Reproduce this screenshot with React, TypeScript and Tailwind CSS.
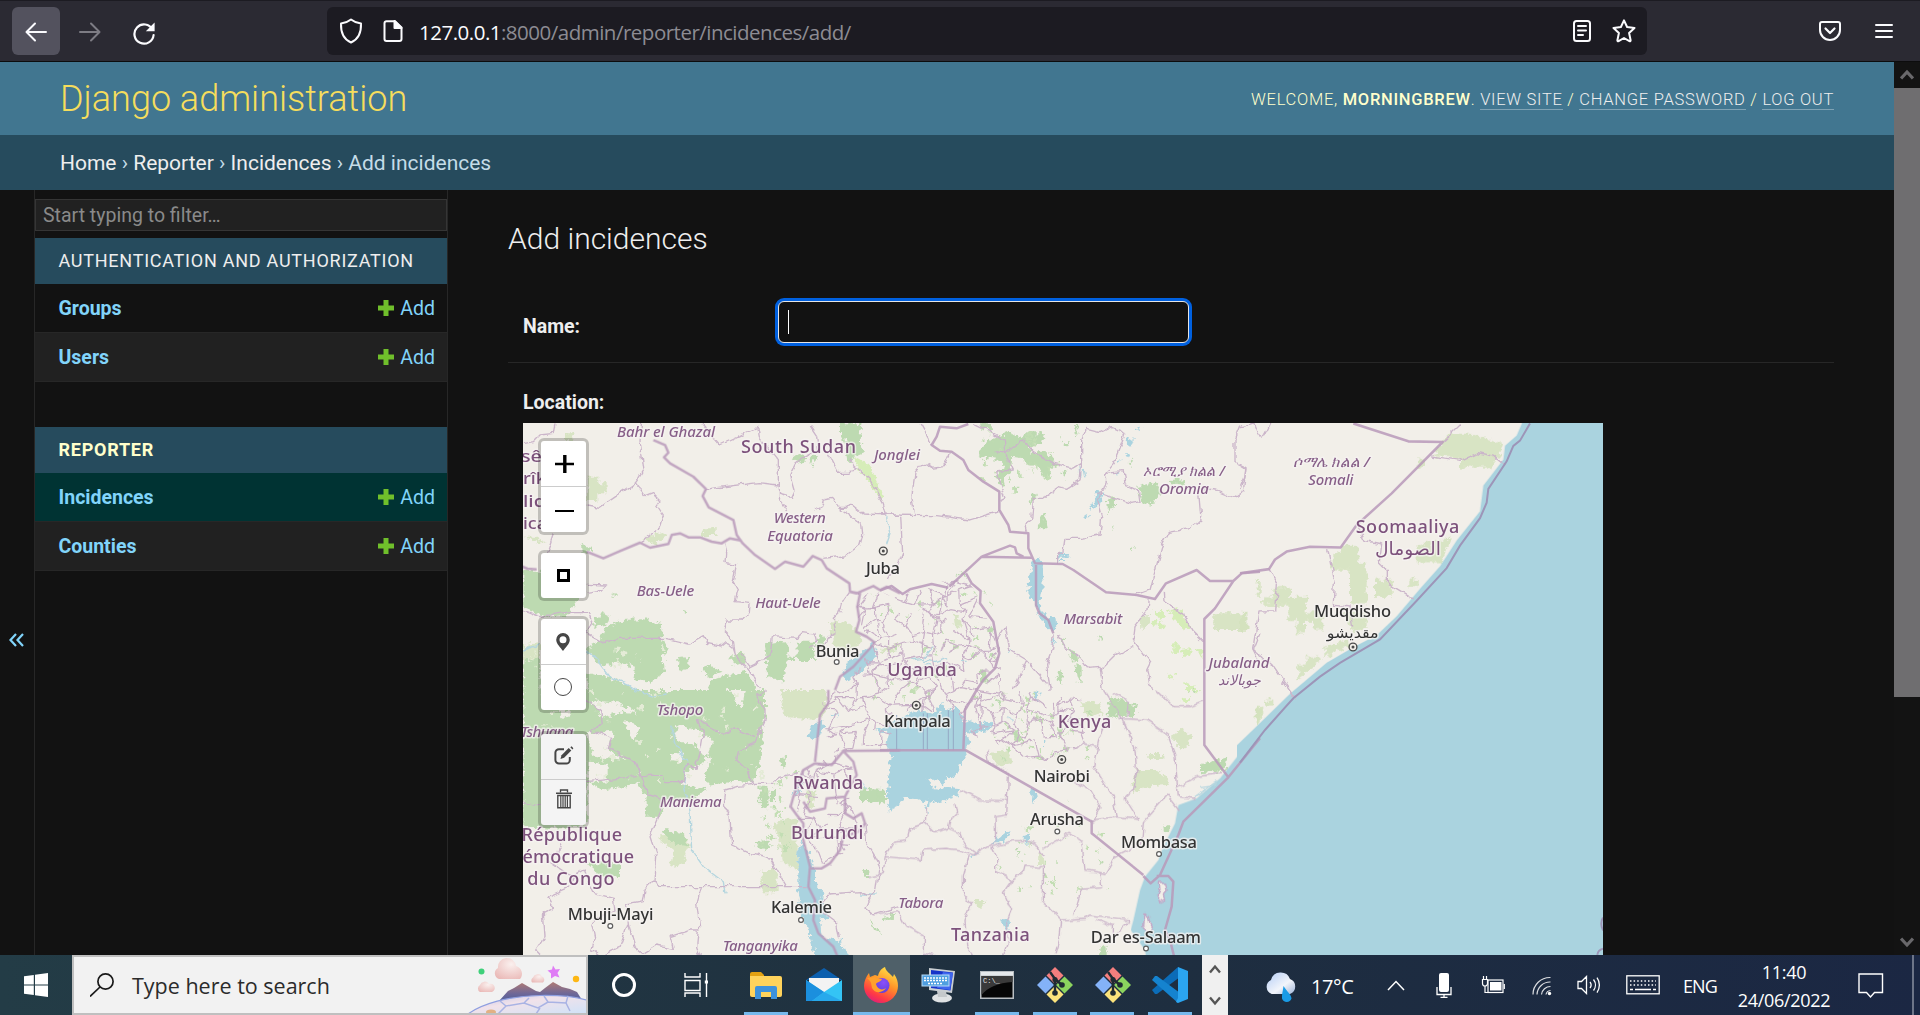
import React from "react";

/* ------------------------------------------------------------------ */
/* Map data: each sheet is a section of the map with its own grid     */
/* ------------------------------------------------------------------ */

type Sheet = {
  t: string;
  water?: string;
  ocean?: string;
  green?: string;
  holes?: string;
  pale?: string;
  lime?: string;
  rivers?: string;
  admin: string;
  nation: string;
  sea?: string;
  islands?: string;
};

const sheets: Sheet[] = [
  {
    t: "translate(520 420) scale(.33333)",
    green:
      "M10 452H190L165 560 140 585 80 590 10 560Z M220 600L250 580 272 590 255 615 225 620Z M250 630L300 600 370 598 425 610 430 655 445 680 430 710 435 760 390 785 340 780 345 740 300 725 250 740 215 710 200 680 240 660Z M735 670L780 665 805 668 805 710 830 710 830 665 880 665 885 720 800 720 790 785 745 770Z M475 715L505 710 505 745 475 755Z M545 740L575 735 605 755 560 770Z M815 115L835 100 860 115 840 130Z M868 120l12 -15 8 5 -10 28z M960 10L1025 10 1018 50 1030 100 1005 110 985 125 975 60 960 45Z M275 525l12 -2 3 8z M485 570l12 2 3 10 -12 -2z M625 715L670 695 680 725 650 735z M185 375l25 5 0 15 -20 0z M900 640l20 10 -10 30 -25 0z M10 720L60 715 62 810 10 810z M200 760L260 770 330 800 340 810 200 810z M580 775l100 -20 20 30 10 25 -150 0z",
    pale: "M200 170h35v20h25v30h-25v20h-30z M135 40h25v20h-25z M545 325h45v20h-45z M10 350l50 20 20 0 -40 -20z M370 355l60 -20 15 10 -40 30z M930 600l60 10 40 50 -40 40 -50 -20z M10 675L60 670 60 720 10 720z",
    lime: "M1005 110L1050 135 1080 205 1090 250 1060 205 1010 140Z",
    water: "M1060 670L1072 700 1040 740 1000 770 985 785 965 765 990 720 1040 685Z",
    rivers: "M10 690L60 675 M200 690L230 720 270 770 320 790 350 810 M1100 290L1110 340 1100 370",
    nation:
      "M400 60L435 75 445 98 432 112 450 130 520 170 558 207 548 228 566 262 640 300 650 345 668 370 705 405 765 447 795 425 850 440 878 408 905 420 920 445 988 490 990 515 1020 520 1012 560 1018 600 1008 635 1040 650 1065 668 M0 437L22 446 50 448 M200 395L250 415 300 393 360 368 390 383 445 372 455 345 480 340 505 352 540 352 575 365 605 370 630 355 665 362 M1065 668L1000 740 960 770 945 810 M988 515L1010 520 1060 498 1080 510 1100 500 1140 520",
    admin:
      "M105 10L100 40 60 45 40 65 15 70 M365 10L360 60 372 150 360 170 345 190 240 262 200 255 M345 190L375 230 400 220 420 240 410 255 430 285 420 320 380 350 365 368 M545 10L600 75 710 25 715 50 775 125 775 235 800 270 M558 207L715 188 775 195 M775 222L815 232 825 210 812 165 830 130 855 110 895 90 890 50 870 20 M918 90L955 160 990 160 1005 142 M985 120L1050 180 1090 250 1100 290 M885 270L905 260 910 240 935 235 960 265 975 265 990 250 1030 282 1140 286 M960 265L1025 315 1028 345 1020 375 975 408 910 415 M615 370L620 400 618 428 650 435 640 480 655 510 645 545 690 550 688 575 665 600 620 600 610 630 640 660 645 700 M988 515L970 540 960 575 940 595 948 640 925 650 905 680 870 685 M200 490L260 492 235 515 200 520 M10 570L60 590 150 575 205 575 215 605 200 640 250 668 300 655 440 655 510 672 550 650 560 670 600 678 615 665 640 685 650 715 680 740 700 770 718 810 M660 700L690 740 750 710 757 650 830 655 850 635 885 640 890 665 M100 340L90 370 80 400",
  },
  {
    t: "translate(520 690) scale(.33333)",
    green:
      "M10 0H735L735 60 730 100 725 210 695 280 645 275 560 285 555 240 580 200 560 205 530 235 495 240 490 285 560 295 520 330 430 330 425 380 380 380 375 310 350 280 260 300 200 275 200 410 10 415Z M718 290L745 290 745 355 720 350Z M750 300l15 0 0 30 -15 0z M705 460L740 452 755 470 730 478Z M200 520L300 520 300 565 240 555Z M1020 295L1090 300 1090 335 1020 332Z M1030 540h15v18h-15z M780 210l15 -10 5 20 -15 15z M1050 690L1085 730 1060 720z M1085 685L1125 675 1120 690z M430 420l60 10 20 40 -60 -10z",
    holes:
      "M620 0L675 0 665 55 640 20Z M470 105L515 115 545 130 580 150 560 200 540 190 525 160 480 160 465 140Z M495 250L555 235 555 290 500 295Z M200 130L280 125 265 180 320 210 220 200Z M450 190L490 185 485 215 455 210Z M215 30l80 10 60 30 -50 -5 -60 20z M205 215l55 10 0 50 -55 0z M100 40l60 30 -30 15z M310 90l50 20 -20 40z",
    pale: "M760 400L830 380 835 540 790 520 775 450Z M725 540h45v70h-45z M780 0h140v60l-30 30 -100 -10z M410 440l80 -10 20 30 -20 60 -40 10 10 -50z M265 220h50v50h-50z M860 300l30 0 -10 50 -20 0z",
    water:
      "M848 450L860 480 885 530 885 580 910 605 905 640 925 680 900 690 905 740 960 750 985 795 985 815 890 810 870 740 850 690 835 600 835 560 835 500 842 520 832 490Z M875 105L915 90 900 140 885 145 860 140Z M830 280L850 250 845 290 815 320Z M1145 115L1100 165 1110 185 1115 220 1100 300 1110 365 1145 330Z M930 75l30 -5 -20 12z",
    rivers: "M340 0L400 20 440 15 M455 110L470 170 500 215 490 290 510 360 515 480 550 530 610 575 615 610 M1020 615L1070 615 M1020 270L1040 300",
    nation:
      "M925 0L925 40 900 75 885 215 M1140 181L970 183 935 225 885 220 850 240 840 265 820 320 812 350 830 375 850 400 850 450 870 530 865 590 885 630 880 690 895 730 940 770 955 805 M970 183L1000 215 1010 255 985 300 975 320 920 325 915 355 870 365 850 335 M975 320L975 370 1000 385 1025 370 1035 400 1015 425 970 440 960 480 930 520 905 535 870 535",
    admin:
      "M200 30L245 65 250 100 210 120 275 145 265 175 345 215 365 260 430 258 435 275 490 275 500 220 525 235 540 190 550 130 530 90 570 110 610 130 650 115 705 140 M740 0L710 15 735 60 735 90 705 160 655 180 650 210 690 250 700 280 760 280 780 262 830 250 M700 283L650 290 615 300 610 340 630 380 635 465 690 490 750 505 800 590 M365 260L385 315 420 325 425 360 390 440 410 500 405 570 420 590 860 590 M405 570L375 600 370 635 320 645 325 700 345 770 370 790 410 765 460 775 450 740 510 720 535 720 530 770 545 810 M545 590L530 640 540 720 M120 460L110 490 90 495 80 510 155 560 190 540 220 610 280 625 285 660 240 680 215 700 225 750 215 780 240 800 300 770 325 700 M160 560L150 590 80 620 100 655 70 670 75 740 50 780 70 800 M10 335L60 345 M200 275L350 260 M1035 400L1040 460 1060 490 1080 530 1070 600 1050 620 1035 655 1060 675 1140 650 M905 640L930 612 1020 605 1050 620 M905 660L945 690 955 745",
  },
  {
    t: "translate(880 420) scale(.33333)",
    green:
      "M295 95L330 60 390 35 420 55 430 40 495 40 490 65 450 80 455 105 480 90 510 105 535 135 510 145 515 175 485 165 480 140 440 135 430 115 400 110 395 150 370 180 345 170 375 140 350 120 300 110Z M775 200L830 185 845 215 830 235 815 255 785 250Z M865 180L910 178 915 195 870 190Z M300 10h35v15h-30z M450 235l15 -15 5 10 -15 25z M680 240l25 -10 0 25 -20 25z M485 280l10 0 5 45 -25 0z M565 690l25 5 5 30 -20 -5z M585 730l20 10 0 50 -15 -20z M530 755l15 0 5 40 -20 -20z M325 620l20 5 -5 20 -15 -10z M545 650l10 5 -2 30z M232 460l25 -5 0 20z M545 70l25 -5 -12 18z M585 15l10 0 0 30 -8 0z M400 195l15 5 -3 20 -12 -5z M690 318l12 2 -6 8z M752 385l10 -8 -5 20z M355 180l15 0 5 20 -15 -5z M655 655l15 -5 -5 15z M545 155l18 0 -8 20z M745 130l15 -15 -5 25z M300 750l20 5 5 30 -25 5z M325 700l20 -2 -5 15z",
    pale: "M780 590l30 -5 0 20 -25 28z M1000 580h102v50h-102z M1130 480h12v50h-12z M0 690l50 -20 15 5 -40 25z M220 580l15 10 10 30 -20 0z",
    lime: "M820 570l20 0 15 20 -15 10z M815 600l15 0 -5 20z M865 570l30 -5 35 60 -20 5 -30 -35z M840 605l15 10 -10 15 -12 -10z M880 670l15 0 5 25 -20 5z M905 690l30 -5 -5 25 -25 0z M945 690l25 -5 0 30z M865 765l20 -5 -5 20z M915 790l30 10 0 10 -30 0z",
    water:
      "M455 430L475 412 485 430 488 500 480 560 500 590 530 595 532 630 515 635 480 590 465 550 445 520 448 470Z M648 215L670 218 658 250 642 265 646 240Z M625 262L645 255 635 272Z M612 290L628 278 620 300Z M740 60L762 55 752 82 742 78Z M735 100l15 0 -5 14z M708 118l22 2 -18 8z M766 25l18 -6 -8 14z M530 402h35v8h-30z M530 420h25v6h-25z M514 660l8 0 -2 18z M707 160l8 0 -4 8z",
    rivers: "M90 720L130 715 160 680 M130 720L165 725 200 712 M135 730l20 10 M240 718h20 M600 140l3 30 M610 150l5 25 M388 700l10 -15",
    nation:
      "M265 12L230 25 180 20 170 50 155 75 180 92 215 95 250 120 265 150 310 185 358 215 358 270 385 315 390 335 445 340 445 385 465 430 548 432 580 450 678 517 770 525 825 537 858 490 950 450 990 483 1060 483 1085 460 1140 455 M208 500L305 410 455 413 M305 410L390 377 405 382 410 400 430 410 M0 512L35 498 68 522 90 508 155 492 205 503 M258 460L275 490 302 513 300 550 340 605 350 660 358 700 345 745 310 780 290 810 M1060 483L1005 565 973 597 973 810 M468 435V555L478 580 505 600 520 640",
    admin:
      "M0 285L170 287 270 300 358 273 M62 290L68 400 60 420 25 480 M105 285L95 230 105 160 130 130 155 145 190 140 208 100 M120 10L145 55 155 75 M280 10L340 40 370 60 375 100 400 150 350 155 378 235 360 245 M350 95L375 100 430 60 460 95 520 130 580 145 605 130 605 60 620 25 660 35 690 20 735 40 720 80 700 130 675 160 680 180 670 210 650 240 M605 130L600 180 560 205 540 200 490 235 460 235 455 300 435 315 440 335 M675 160L730 155 735 190 775 210 780 245 755 250 710 235 690 230 650 215 M650 240L665 290 660 345 610 355 555 355 548 400 530 405 530 428 M1085 10L1065 60 1065 125 1098 140 1090 215 1065 232 1010 210 955 205 963 300 930 325 868 337 845 380 810 510 770 525 M805 535L800 575 765 620 760 660 810 730 800 750 815 810 M850 515L852 545 910 580 935 630 970 665 M535 640L555 680 600 710 625 745 660 742 670 810 M660 750L705 705 760 680 M520 640L515 690 500 730 510 810 M350 660L375 620 390 690 440 720 500 790 M440 720L400 810 M1140 640L1120 690 1135 720",
  },
  {
    t: "translate(880 690) scale(.33333)",
    water:
      "M-12 120L50 90 110 60 170 70 185 40 200 60 230 55 255 90 300 100 335 95 340 110 290 130 255 120 270 160 255 185 260 200 235 225 240 250 215 270 200 255 195 280 160 270 140 265 165 300 195 290 240 295 235 315 180 335 150 330 145 370 135 335 110 325 70 320 55 350 30 360 20 320 30 290 25 250 35 190 35 170 20 160 25 130Z M455 300l15 0 3 20 -15 25 -5 -15z M335 460l45 -35 15 5 -30 30z M435 435l15 -5 -5 35 -12 -5z M360 685l25 5 5 30 -20 -10z M465 5h10v25h-10z M492 152h10v10h-10z M275 495l20 -5 -15 15z",
    ocean: "M1145 106L1060 215 1020 265 950 325 895 345 885 400 850 470 835 510 795 560 780 600 760 690 752 720 795 780 800 815H1145Z",
    green:
      "M690 25L740 30 770 45 765 75 700 80 680 75Z M960 225L1045 200 1040 235 1015 245 960 250Z M850 410l18 -5 0 25 -15 -5z M10 680l35 -10 0 15 -30 8z M655 780l25 -15 0 45 -25 0z M-5 300l20 5 0 35 -20 5z M535 110l10 0 0 35 -10 0z M345 25l20 10 -5 20z M405 480l10 0 0 20z M415 450l14 5 -8 10z M655 510l10 5 -5 12z M395 130l20 -10 10 40 -20 -10z M930 0l15 0 -10 8z",
    pale: "M880 135L905 118 930 135 925 170 905 180 880 155Z M770 240L830 240 865 265 860 285 790 290 760 310 755 285Z M805 192l45 0 0 15 -45 0z M475 490l12 0 5 35 -18 0z M280 630l40 0 -20 25z M325 190l60 -10 10 40 -40 10z M600 40l60 0 10 30 -50 10z M1128 50h14v50h-14z",
    lime: "M905 25l25 0 0 10 -20 3z M930 0l30 0 -10 12z",
    rivers: "M945 320L1010 275 M960 290L1000 285 M385 80l10 10",
    sea: "M50 75V181 M130 70V181 M142 70V181 M205 60V181 M220 60V181",
    islands: "M838 580l16 0 4 18 -8 18 4 12 -18 8 -4 -12 8 -20z M795 668l10 12 4 20 8 18 -12 6 -14 -12 2 -22z",
    nation:
      "M1140 145L1045 262 910 395 895 435 840 555 812 580 790 558 M973 0V165L1045 262 M0 181H258L635 395 635 430 790 555 M290 0L255 60 250 181 M830 558L865 558 880 575 875 650 855 720 870 750 885 810",
    admin:
      "M673 0L730 90 765 180 770 250 760 300 735 325 775 388 715 380 635 390 M715 85L800 90 860 130 885 200 895 320 950 325 M700 10L745 35 740 80 M680 90L655 155 640 230 700 320 712 380 M860 315L895 360 M860 315L790 395 785 460 705 500 675 550 615 540 605 455 570 430 490 475 M830 0L880 50 930 50 970 35 M895 290L950 260 1020 250 M385 255L380 375 348 380 350 455 280 495 M240 300L300 330 380 332 M280 495L240 480 200 475 125 480 120 510 20 500 10 550 -40 560 M10 510L40 460 80 455 90 415 135 400 140 350 M135 395L165 425 205 415 210 390 230 370 225 340 M205 415L240 430 250 460 290 490 M335 470L350 500 350 545 395 570 430 545 435 525 490 530 490 635 545 690 610 685 630 675 750 690 M335 470L400 455 450 455 475 470 490 500 M660 550L665 590 605 595 580 680 M265 495L250 560 250 610 275 640 255 690 260 770 280 800 M395 570L370 605 395 660 375 710 385 760 370 800 M545 690L540 740 525 790 M-10 675L55 665 75 705 130 735 130 790 180 800 M650 690L700 710 700 740 750 690 M320 180L330 220 385 250 M540 250L630 300 660 350 640 395 M580 180L610 160 650 170",
  },
  {
    t: "translate(1240 420) scale(.33333 .34439)",
    ocean:
      "M850 0H1100V1560H-10V945L60 880 150 795 260 705 340 660 410 625 470 570 540 490 600 425 650 350 720 265 730 190 790 115 795 75 830 45Z",
    pale: "M625 40L690 40 790 70 780 100 750 138 660 138 660 110 580 105Z M533 115h25v22h-25z M278 390L305 385 305 365 355 365 355 412 380 412 380 532 330 532 330 437 278 437Z M405 463h50v50h-50z M533 365L635 340 620 380 600 413h-67z M73 512h27v-24h50v25h50v45h50v50l-30 0 0 -25 -25 0v36h-25v-35h-25v-45l-50 0h-27z M0 560h22v52h-22z M200 687h45v12l-70 55v-44h25z M253 660l75 -25 0 20 -75 35z M75 812h25v20h-25z M47 835h20v25l-20 28z M508 463h25v22h-25z M310 560h70v40l-40 20z",
    nation: "M340 10L505 62 608 64 455 213 350 305 302 370 210 368 140 382 105 405 87 433 0 445",
    admin:
      "M608 64L665 10 M570 107L660 120 715 95 760 105 795 132 M350 305L375 350 425 360 418 415 445 440 445 475 527 523 M263 375L283 475 280 535 330 540 338 600 M87 433L112 475 107 557 57 557 38 665 95 710 165 808 M0 130L18 140 15 165 0 200 M0 20L45 12 60 50 75 40 90 10",
  },
];

const maritime =
  "M0 995L75 900 160 808 240 745 300 705 420 637 530 525 620 430 660 365 720 285 740 240 745 200 800 120 820 75 840 60 870 10 M1089 1445C1083 1455 1083 1470 1089 1482 M1089 1535C1080 1537 1073 1545 1072 1553";

type Kind = "country" | "state" | "city";
const labels: [string, number, number, number, number, Kind][] = [
  ["sê", 521, 461.7, 21, 17, "country"],
  ["rîk", 523, 484, 23, 17, "country"],
  ["liq", 523, 506.7, 23, 17, "country"],
  ["ica", 523, 529, 24, 17, "country"],
  ["Bahr el Ghazal", 617, 437, 98, 15, "state"],
  ["South Sudan", 741, 453, 115, 18, "country"],
  ["Jonglei", 874, 460, 46, 15, "state"],
  ["Western", 773.7, 522.7, 52, 15, "state"],
  ["Equatoria", 767.3, 540.7, 65.5, 15, "state"],
  ["Bas-Uele", 636.7, 596, 57.5, 15, "state"],
  ["Haut-Uele", 755.3, 608, 65.5, 15, "state"],
  ["Juba", 866, 574, 34, 16.5, "city"],
  ["Bunia", 815.7, 656.7, 43.7, 16.5, "city"],
  ["Uganda", 887.3, 675.7, 69.5, 18, "country"],
  ["Marsabit", 1063.3, 624, 59, 15, "state"],
  ["ኦሮሚያ ክልል /", 1143, 476, 82, 15, "state"],
  ["Oromia", 1159, 494, 50, 15, "state"],
  ["ሶማሌ ክልል /", 1292.7, 466.5, 77, 15, "state"],
  ["Somali", 1308.3, 484.7, 45, 15, "state"],
  ["Jubaland", 1208.5, 668, 61, 15, "state"],
  ["جوبالاند", 1217.6, 684.5, 44, 14, "state"],
  ["Soomaaliya", 1355.7, 532.6, 103.7, 18, "country"],
  ["الصومال", 1375, 555, 66, 18, "country"],
  ["Muqdisho", 1314, 617, 77, 16.5, "city"],
  ["مقديشو", 1326.7, 637.6, 52, 15, "city"],
  ["Kenya", 1057.7, 728.3, 53.7, 18, "country"],
  ["Kampala", 884, 726.7, 66.7, 16.5, "city"],
  ["Nairobi", 1033.7, 781.7, 56.3, 16.5, "city"],
  ["Arusha", 1030, 824.7, 54, 16.5, "city"],
  ["Mombasa", 1121, 848, 76, 16.5, "city"],
  ["Dar es-Salaam", 1090.7, 943.3, 110.3, 16.5, "city"],
  ["Tanzania", 951, 941, 78.7, 18, "country"],
  ["Tabora", 898.3, 907.7, 45, 15, "state"],
  ["Tshopo", 656.7, 715, 46.7, 15, "state"],
  ["Tshuapa", 520.5, 736.5, 53, 15, "state"],
  ["Maniema", 660, 806.7, 61.7, 15, "state"],
  ["Rwanda", 792.7, 789.3, 70.7, 18, "country"],
  ["Burundi", 791, 838.7, 72.3, 18, "country"],
  ["République", 521.5, 840.7, 100.5, 18, "country"],
  ["émocratique", 522.5, 862.7, 111.5, 18, "country"],
  ["du Congo", 527.3, 885.3, 87.3, 18, "country"],
  ["Mbuji-Mayi", 567.7, 920, 85.7, 16.5, "city"],
  ["Kalemie", 771, 913.3, 61, 16.5, "city"],
  ["Tanganyika", 722.7, 951.2, 75.3, 15, "state"],
];

const labelClass: Record<Kind, string> = {
  country: "fill-[#7d527c] font-medium",
  state: "fill-[#875f88] italic font-medium",
  city: "fill-[#333] font-medium",
};

const towns: [number, number][] = [
  [836.7, 662],
  [1057.3, 831.5],
  [1159, 854],
  [1146, 948.5],
  [610.3, 926],
  [801, 920],
];
const capitals: [number, number][] = [
  [883.3, 551],
  [916.3, 705.3],
  [1061.7, 759.5],
  [1353, 647],
];

/* Irregular network used for the dense district boundaries */
function mesh(x0: number, y0: number, x1: number, y1: number, s: number) {
  let seed = 7;
  const rnd = () => {
    seed = (seed * 16807) % 2147483647;
    return seed / 2147483647 - 0.5;
  };
  const cols = Math.ceil((x1 - x0) / s) + 1;
  const rows = Math.ceil((y1 - y0) / s) + 1;
  const p: [number, number][][] = [];
  for (let r = 0; r < rows; r++) {
    p.push([]);
    for (let c = 0; c < cols; c++) p[r].push([x0 + c * s + rnd() * s * 1.15, y0 + r * s + rnd() * s * 1.15]);
  }
  const seg = (a: [number, number], b: [number, number]) => `M${a[0].toFixed(1)} ${a[1].toFixed(1)}L${b[0].toFixed(1)} ${b[1].toFixed(1)}`;
  let d = "";
  for (let r = 0; r < rows; r++)
    for (let c = 0; c < cols; c++) {
      if (c + 1 < cols && rnd() < 0.2) d += seg(p[r][c], p[r][c + 1]);
      if (r + 1 < rows && rnd() < 0.25) d += seg(p[r][c], p[r + 1][c]);
    }
  return d;
}
const districtsNorth = mesh(810, 580, 1100, 770, 11);
const districtsSouth = mesh(785, 750, 875, 870, 12);

/* Scattered vegetation specks */
function specks(x0: number, y0: number, x1: number, y1: number, n: number, start: number) {
  let seed = start;
  const rnd = () => {
    seed = (seed * 16807) % 2147483647;
    return seed / 2147483647;
  };
  let d = "";
  for (let i = 0; i < n; i++) {
    const w = 1 + rnd() * 3;
    d += `M${(x0 + rnd() * (x1 - x0)).toFixed(1)} ${(y0 + rnd() * (y1 - y0)).toFixed(1)}l${w.toFixed(1)} ${(rnd() * 2).toFixed(1)} 0 ${w.toFixed(1)} -${w.toFixed(1)} 0z`;
  }
  return d;
}
const greenSpecks =
  specks(870, 590, 1000, 700, 40, 11) + specks(990, 690, 1090, 760, 45, 23) + specks(990, 800, 1110, 900, 30, 31) + specks(760, 770, 800, 850, 30, 5) + specks(980, 430, 1060, 490, 30, 77);
const creamSpecks = specks(540, 690, 765, 780, 60, 41) + specks(525, 640, 670, 700, 30, 97);

function MapCanvas() {
  return (
    <svg viewBox="523 423 1080 532" className="block h-[532px] w-[1080px] bg-[#f2efe9]" fill="none">
      <defs>
        <filter id="wiggle" x="523" y="423" width="1080" height="532" filterUnits="userSpaceOnUse" colorInterpolationFilters="sRGB">
          <feTurbulence type="fractalNoise" baseFrequency="0.11" numOctaves="2" seed="4" />
          <feDisplacementMap in="SourceGraphic" scale="7" xChannelSelector="R" yChannelSelector="G" />
        </filter>
        <filter id="rough" x="523" y="423" width="1080" height="532" filterUnits="userSpaceOnUse" colorInterpolationFilters="sRGB">
          <feTurbulence type="fractalNoise" baseFrequency="0.2" numOctaves="3" seed="9" />
          <feDisplacementMap in="SourceGraphic" scale="9" xChannelSelector="R" yChannelSelector="G" />
        </filter>
        <clipPath id="northClip">
          <path d="M858 593L903 594 930 588 966 573 980 605 1000 650 1000 690 1040 692 1082 700 1085 745 1040 765 1000 745 968 735 960 712 900 712 885 750 828 752 822 700 845 685 875 645 858 620Z" />
        </clipPath>
        <clipPath id="southClip">
          <path d="M815 765L843 752 856 775 848 798 862 815 855 840 830 866 810 860 802 825 792 805 803 770Z" />
        </clipPath>
      </defs>

      <g filter="url(#rough)">
        {sheets.map((s, i) => (
          <g key={i} transform={s.t}>
            {s.pale && <path d={s.pale} fill="#d4e2bd" fillOpacity=".85" />}
            {s.lime && <path d={s.lime} fill="#d6edb8" />}
            {s.green && <path d={s.green} fill="#bddab1" />}
            {s.holes && <path d={s.holes} fill="#f2efe9" />}
          </g>
        ))}
        <path d={greenSpecks} fill="#c3deb4" />
        <path d={creamSpecks} fill="#e4ebd6" />
        {sheets.map((s, i) => (
          <g key={i} transform={s.t}>
            {s.water && <path d={s.water} fill="#aad3df" />}
          </g>
        ))}
      </g>

      {sheets.map((s, i) => (
        <g key={i} transform={s.t}>
          {s.ocean && <path d={s.ocean} fill="#aad3df" />}
        </g>
      ))}
      <path d="M889 722L958 715 962 748 890 750Z" fill="#aad3df" />

      <g filter="url(#wiggle)" strokeLinejoin="round">
        <g clipPath="url(#northClip)">
          <path d={districtsNorth} stroke="#c8b0c7" strokeWidth="1.2" />
        </g>
        <g clipPath="url(#southClip)">
          <path d={districtsSouth} stroke="#c8b0c7" strokeWidth="1.2" />
        </g>
        {sheets.map((s, i) => (
          <g key={i} transform={s.t}>
            {s.rivers && <path d={s.rivers} stroke="#b5d6df" strokeWidth="4" />}
            {s.islands && <path d={s.islands} fill="#f2efe9" stroke="#c0a5c6" strokeWidth="4" />}
            <path d={s.admin} stroke="#cbb5ca" strokeWidth="4" />
          </g>
        ))}
      </g>
      {sheets.map((s, i) => (
        <g key={i} transform={s.t} strokeLinejoin="round">
          {s.sea && <path d={s.sea} stroke="#96a9c4" strokeWidth="3" />}
          <path d={s.nation} stroke="#b999ba" strokeOpacity=".85" strokeWidth="7.5" />
        </g>
      ))}
      <g transform="translate(1240 420) scale(.33333 .34439)">
        <path d={maritime} stroke="#9d95b8" strokeWidth="6" />
      </g>

      {towns.map(([x, y]) => (
        <circle key={x} cx={x} cy={y} r="2.4" fill="#fff" stroke="#5c5c5c" strokeWidth="1.2" />
      ))}
      {capitals.map(([x, y]) => (
        <g key={x}>
          <circle cx={x} cy={y} r="3.9" fill="#f2efe9" stroke="#4b4b4b" strokeWidth="1.4" />
          <circle cx={x} cy={y} r="1.5" fill="#4b4b4b" />
        </g>
      ))}
      <g fontFamily="'Noto Sans', 'DejaVu Sans', sans-serif" stroke="#f6f3f2" strokeOpacity=".75" strokeWidth="3" strokeLinejoin="round" paintOrder="stroke">
        {labels.map(([t, x, y, w, size, kind]) => (
          <text key={t} x={x} y={y} textLength={w} fontSize={size} lengthAdjust={/[a-z]/.test(t) && t.length > 3 ? "spacing" : "spacingAndGlyphs"} className={labelClass[kind]}>
            {t}
          </text>
        ))}
      </g>
    </svg>
  );
}

function MapControls() {
  const group = "overflow-hidden rounded-md border-[3px] border-black/20 bg-clip-padding";
  const cell = "flex h-[45px] w-[45px] items-center justify-center";
  return (
    <div className="absolute left-[15px] top-[15px] flex flex-col gap-[15px]">
      <div className={group + " bg-white"}>
        <div className={cell + " pl-0.5"}>
          <svg viewBox="0 0 19 19" className="h-[19px] w-[19px]" stroke="#000">
            <path d="M0 10h19" strokeWidth="2.4" />
            <path d="M9.8 1v18" strokeWidth="3.4" />
          </svg>
        </div>
        <div className={cell + " h-[46px] border-t border-[#ccc] pb-0 pl-0.5 pt-0.5"}>
          <div className="h-0.5 w-[19px] bg-black" />
        </div>
      </div>
      <div className={group + " bg-white"}>
        <div className={cell}>
          <div className="h-[13px] w-[13px] border-[3px] border-black" />
        </div>
      </div>
      <div className={group + " bg-white"}>
        <div className={cell + " pr-px"}>
          <svg viewBox="0 0 14 18" className="h-[18px] w-[14px]">
            <path
              fillRule="evenodd"
              fill="#464646"
              d="M7 0a6.8 6.8 0 0 1 6.8 6.8C13.8 11 9.5 14.5 7 18 4.5 14.5.2 11 .2 6.8A6.8 6.8 0 0 1 7 0zM7 3.2a3.500 3.500 0 1 0 0 7 3.500 3.500 0 0 0 0-7z"
            />
          </svg>
        </div>
        <div className={cell + " h-[46px] border-t border-[#ccc] pb-0.5 pr-0.5"}>
          <div className="h-[18px] w-[18px] rounded-full border-[1.5px] border-[#464646]" />
        </div>
      </div>
      <div className={group + " mt-[3px] bg-[#f4f4f4]"}>
        <div className={cell + " pb-0.5"}>
          <svg viewBox="0 0 20 20" className="h-5 w-5" fill="none" stroke="#464646">
            <path d="M10 3.200H5a3.600 3.600 0 0 0-3.600 3.600V14A3.600 3.600 0 0 0 5 17.600h7.200a3.600 3.600 0 0 0 3.600-3.600v-3" strokeWidth="2" />
            <path d="M6.500 13l1-3.800 7.200-7.200 2.600 2.600-7.200 7.200z" fill="#464646" stroke="none" />
            <path d="M16.300 1.200l1.300-.9 1.800 1.900-1 1.200z" fill="#464646" stroke="none" />
          </svg>
        </div>
        <div className={cell + " h-[46px] border-t border-[#ccc] pb-2"}>
          <svg viewBox="0 0 18 20" className="h-5 w-[18px]" fill="none" stroke="#464646">
            <path d="M1 4.200h16" strokeWidth="1.500" />
            <path d="M5.500 3.500V1h7v2.500" strokeWidth="1.300" />
            <path d="M2.800 6.500h12.400v12.300H2.800z" strokeWidth="1.400" />
            <path d="M5.800 7v11.500M8 7v11.500M10.200 7v11.500M12.400 7v11.500" strokeWidth="1.200" />
          </svg>
        </div>
      </div>
    </div>
  );
}

/* ------------------------------------------------------------------ */
/* Browser chrome                                                      */
/* ------------------------------------------------------------------ */

function BrowserBar() {
  return (
    <header className="flex h-[62px] items-center border-b border-t border-b-[#0c0c0d] border-t-[#1c1b22] bg-[#2b2a33] text-[#fbfbfe]">
      <div className="ml-3 flex h-12 w-12 items-center justify-center rounded-md bg-[#53525e]">
        <svg viewBox="0 0 22 20" className="mt-0.5 h-5 w-[22px]" fill="none" stroke="currentColor" strokeWidth="2" strokeLinecap="round" strokeLinejoin="round">
          <path d="M21 10H2M10 1.500L1.500 10l8.500 8.500" />
        </svg>
      </div>
      <div className="ml-[19px] mt-0.5 flex w-[22px] text-[#7d7c84]">
        <svg viewBox="0 0 22 20" className="h-5 w-[22px]" fill="none" stroke="currentColor" strokeWidth="2" strokeLinecap="round" strokeLinejoin="round">
          <path d="M1 10h19M12 1.500l8.500 8.500-8.500 8.500" />
        </svg>
      </div>
      <svg viewBox="0 0 24 24" className="ml-[31px] mt-[3px] h-6 w-6" fill="none" stroke="currentColor" strokeWidth="2.200">
        <path d="M20.500 8.500A9.600 9.600 0 1 0 21.600 14" strokeLinecap="round" />
        <path d="M22.600 1.500v8.800h-8.800z" fill="currentColor" stroke="none" />
      </svg>
      <div className="ml-[171px] flex h-12 w-[1320px] items-center rounded-md bg-[#1c1b22] pl-3 pr-[11px]">
        <svg viewBox="0 0 24 26" className="h-[26px] w-6" fill="none" stroke="currentColor" strokeWidth="2" strokeLinejoin="round">
          <path d="M12 1.500c3 2.400 6.300 3.600 10 4C22.300 14 19 21.500 12 24.500 5 21.500 1.700 14 2 5.500c3.700-.4 7-1.600 10-4z" />
        </svg>
        <svg viewBox="0 0 20 22" className="ml-5 h-[22px] w-5" fill="none" stroke="currentColor" strokeWidth="2">
          <path d="M12 1.200H3.500A2 2 0 0 0 1.500 3v16a2 2 0 0 0 2 2h13a2 2 0 0 0 2-2V7.500z" strokeLinejoin="round" />
          <path d="M11.500 1v7H18.500z" fill="currentColor" strokeLinejoin="round" />
        </svg>
        <p className="ml-4 mt-0.5 font-['Open_Sans'] text-[20.5px] tracking-[-0.5px] text-[#8d8c93]">
          <span className="text-[#fbfbfe]">127.0.0.1</span>:8000/admin/reporter/incidences/add/
        </p>
        <svg viewBox="0 0 18 22" className="ml-auto h-[22px] w-[18px]" fill="none" stroke="currentColor" strokeWidth="2">
          <rect x="1" y="1" width="16" height="20" rx="2.500" />
          <path d="M5 6h8M5 10.500h8M5 15h5" strokeLinecap="round" />
        </svg>
        <svg viewBox="0 0 24 24" className="ml-[21px] h-6 w-6" fill="none" stroke="currentColor" strokeWidth="2" strokeLinejoin="round">
          <path d="M12 1.300l3.100 6.700 7.400.9-5.400 5.100 1.500 7.300c.1.700-.5 1.200-1.200.9L12 19l-5.400 3.200c-.7.300-1.300-.2-1.200-.9L6.900 14 1.500 8.900 8.900 8z" />
        </svg>
      </div>
      <svg viewBox="0 0 22 20" className="ml-[172px] h-5 w-[22px]" fill="none" stroke="currentColor" strokeWidth="2" strokeLinecap="round" strokeLinejoin="round">
        <path d="M3 1h16a2 2 0 0 1 2 2v6a10 10 0 0 1-20 0V3a2 2 0 0 1 2-2z" />
        <path d="M6.500 7.500L11 12l4.500-4.500" strokeWidth="2.200" />
      </svg>
      <div className="ml-[34px] flex w-[18px] flex-col gap-1">
        <i className="h-0.5 rounded bg-[#fbfbfe]" />
        <i className="h-0.5 rounded bg-[#fbfbfe]" />
        <i className="h-0.5 rounded bg-[#fbfbfe]" />
      </div>
    </header>
  );
}

/* ------------------------------------------------------------------ */
/* Django admin                                                        */
/* ------------------------------------------------------------------ */

function ModelRow({ name, tone }: { name: string; tone: string }) {
  return (
    <div className={"flex h-[49px] items-center border-b border-[#272727] pl-[23.5px] pr-3 pt-0.5 text-[#81d4fa] " + tone}>
      <span className="text-[19.5px] font-bold">{name}</span>
      <svg viewBox="0 0 16 16" className="mb-0.5 ml-auto h-4 w-4" fill="#70bf2b">
        <path d="M5.500 0h5v5.500H16v5h-5.500V16h-5v-5.500H0v-5h5.500z" />
      </svg>
      <span className="ml-[6px] text-[19.5px]">Add</span>
    </div>
  );
}

function Caption({ children, className }: { children: string; className: string }) {
  return <h2 className={"flex h-[46px] items-center bg-[#264b5d] pb-0.5 pl-[23.5px] text-[18px] tracking-[0.75px] " + className}>{children}</h2>;
}

function Sidebar() {
  return (
    <nav className="w-[414px] shrink-0 border-x border-[#272727] pt-[9px]">
      <div className="flex h-8 items-center border border-[#353535] bg-[#212121] pl-[7px] pt-0.5 text-[19.5px] text-[#8a8a8a]">Start typing to filter…</div>
      <div className="mt-[7px]">
        <Caption className="text-[#eee]">AUTHENTICATION AND AUTHORIZATION</Caption>
        <ModelRow name="Groups" tone="bg-[#121212]" />
        <ModelRow name="Users" tone="bg-[#212121]" />
      </div>
      <div className="mt-[45px]">
        <Caption className="font-bold text-[#ffffcc]">REPORTER</Caption>
        <ModelRow name="Incidences" tone="bg-[#003333]" />
        <ModelRow name="Counties" tone="bg-[#212121]" />
      </div>
    </nav>
  );
}

function Admin() {
  const link = "border-b border-[#7fa3b5] text-[#eee]";
  return (
    <div className="flex h-[893px] w-[1894px] flex-col overflow-hidden bg-[#121212] font-['Roboto']">
      <div className="flex h-[73px] shrink-0 items-center justify-between bg-[#417690] pl-[60px] pr-[60px]">
        <h1 className="text-[36px] font-light text-[#f5dd5d]">Django administration</h1>
        <div className="mt-0.5 flex whitespace-pre text-[16.5px] font-light leading-[19px] tracking-[0.72px] text-[#ffffcc]">
          WELCOME, <b className="font-medium">MORNINGBREW</b>. <span className={link}>VIEW SITE</span> / <span className={link}>CHANGE PASSWORD</span> /{" "}
          <span className={link}>LOG OUT</span>
        </div>
      </div>
      <div className="flex h-[55px] shrink-0 items-center whitespace-pre bg-[#264b5d] pl-[60px] pt-0.5 text-[21px] text-[#c4dce8]">
        <span className="text-[#eee]">Home</span> › <span className="text-[#eee]">Reporter</span> › <span className="text-[#eee]">Incidences</span> › Add incidences
      </div>
      <div className="flex min-h-0 flex-1">
        <div className="flex w-[34px] shrink-0 justify-center pr-0.5 pt-[443px] text-[#81d4fa]">
          <svg viewBox="0 0 15 14" className="h-[14px] w-[15px]" fill="none" stroke="currentColor" strokeWidth="2.200">
            <path d="M7 1L1.500 7 7 13M14 1L8.500 7l5.500 6" />
          </svg>
        </div>
        <Sidebar />
        <main className="flex-1 pl-[60px] pr-[60px] pt-[30px] text-[#eee]">
          <h1 className="h-[38px] text-[30px] font-light leading-[38px]">Add incidences</h1>
          <section className="mt-[27px] flex h-[78px] border-b border-[#272727] pl-[15px] pt-[14px]">
            <label className="w-[252px] pt-[13px] text-[19.5px] font-bold leading-[29px]">Name:</label>
            <div className="ml-[3px] mt-[2px] flex h-[42px] w-[411px] items-center rounded-md border border-[#e5e5e5] bg-[#121212] pl-[9px] ring-[3px] ring-[#0060df]">
              <i className="h-6 w-px bg-white" />
            </div>
          </section>
          <section className="pl-[15px] pt-[25px]">
            <label className="block h-[35px] text-[19.5px] font-bold leading-[30px]">Location:</label>
            <div className="relative w-[1080px]">
              <MapCanvas />
              <MapControls />
            </div>
          </section>
        </main>
      </div>
    </div>
  );
}

function Scrollbar() {
  return (
    <div className="flex h-[893px] w-[26px] flex-col items-center bg-[#131313]">
      <div className="flex h-[26px] items-center justify-center pb-0.5">
        <svg viewBox="0 0 14 11" className="h-[11px] w-[14px]" fill="none" stroke="#69686b" strokeWidth="3.200">
          <path d="M1 9.500L7 3l6 6.500" />
        </svg>
      </div>
      <div className="h-[609px] w-full bg-[#6f6e70]" />
      <svg viewBox="0 0 14 11" className="mb-[7px] mt-auto h-[11px] w-[14px]" fill="none" stroke="#69686b" strokeWidth="3.200">
        <path d="M1 1.500L7 8l6-6.500" />
      </svg>
    </div>
  );
}

/* ------------------------------------------------------------------ */
/* Windows taskbar                                                     */
/* ------------------------------------------------------------------ */

function SearchArt() {
  return (
    <svg viewBox="468 957 118 56" className="ml-auto h-[56px] w-[118px]">
      <defs>
        <linearGradient id="peak" x1="0" y1="0" x2="0" y2="1">
          <stop offset="0" stopColor="#b07a74" />
          <stop offset=".5" stopColor="#6d6798" />
          <stop offset="1" stopColor="#3d5a9c" />
        </linearGradient>
        <linearGradient id="ground" x1="0" y1="0" x2="1" y2="1">
          <stop offset="0" stopColor="#bfc3ea" />
          <stop offset=".4" stopColor="#f1e2ea" />
          <stop offset="1" stopColor="#cfe2f8" />
        </linearGradient>
        <radialGradient id="puff" cx=".6" cy=".3" r=".8">
          <stop offset="0" stopColor="#faf0ee" />
          <stop offset="1" stopColor="#eab9b7" />
        </radialGradient>
      </defs>
      <circle cx="481.500" cy="971.500" r="3" fill="#3fd07a" />
      <circle cx="576" cy="979" r="3.200" fill="#fdb714" />
      <path d="M553 965.500l2.500 4 4.500-.5-2.500 4 2 4.500-4.500-1.500-4 2.500 0-5-3.500-3 4.500-1z" fill="#df7cf5" />
      <path d="M499 979a6 6 0 0 1-1-11 9 9 0 0 1 18-2 8 8 0 0 1 4 13z" fill="url(#puff)" />
      <path d="M480 992a4 4 0 0 1 0-7 5 5 0 0 1 9-1 4 4 0 0 1 3 8z" fill="url(#puff)" />
      <path d="M532 982.500a3.500 3.500 0 0 1 1-5 5 5 0 0 1 9-1 3.500 3.500 0 0 1 1 6z" fill="url(#puff)" />
      <path d="M499 1001l9-10 6-3 8-5 7 4 7 4 4 1 5-4 8-6 9 5 8 2 7 3 5 8 1 6z" fill="url(#peak)" />
      <path d="M468 1014c14-10 40-18 72-18.500 18-.3 34 .6 48 5V1014z" fill="url(#ground)" stroke="#8f9fe0" strokeWidth="1.200" />
      <path d="M500 1001l6 5 18-3 14 5 10-6 18 1 4 8M506 1006l-8 8M524 1003l5-5M548 1002l-4-6M540 1008l-4 6M566 1003l2-7" fill="none" stroke="#a9b3e4" strokeWidth="1.500" />
      <ellipse cx="491" cy="1012" rx="5" ry="2.500" fill="#e2b184" />
    </svg>
  );
}

function ExplorerIcon() {
  return (
    <svg viewBox="0 0 32 28" className="h-7 w-8">
      <path d="M0 3a2 2 0 0 1 2-2h9l3 3v4H0z" fill="#e3a112" />
      <path d="M0 5h30a2 2 0 0 1 2 2v17a2 2 0 0 1-2 2H2a2 2 0 0 1-2-2z" fill="#ffd35c" />
      <path d="M5 28V17a2 2 0 0 1 2-2h18a2 2 0 0 1 2 2v11h-6v-7H11v7z" fill="#3e92dc" />
    </svg>
  );
}
function MailIcon() {
  return (
    <svg viewBox="0 0 36 33" className="h-[33px] w-9">
      <path d="M0 12L18 0l18 12z" fill="#0c5fae" />
      <path d="M3 10h30v14H3z" fill="#f3f3f3" />
      <path d="M0 12l18 12L36 12v21H0z" fill="#34c4f5" />
      <path d="M0 12l18 12L6 33H0z" fill="#1b8fde" />
      <path d="M6 33l12-9 18 9z" fill="#27a9ec" />
    </svg>
  );
}
function FirefoxIcon() {
  return (
    <svg viewBox="0 0 34 36" className="h-9 w-[34px]">
      <defs>
        <linearGradient id="fx" x1=".8" y1="0" x2=".3" y2="1">
          <stop offset="0" stopColor="#ffe94a" />
          <stop offset=".45" stopColor="#ff9128" />
          <stop offset=".8" stopColor="#ff3a45" />
          <stop offset="1" stopColor="#e01f7a" />
        </linearGradient>
        <radialGradient id="fxg" cx=".6" cy=".3" r=".8">
          <stop offset="0" stopColor="#8a4ffb" />
          <stop offset="1" stopColor="#5b3fd6" />
        </radialGradient>
      </defs>
      <path d="M21 0c1 5 6 7 8 10l1-3c3 4 4 8 4 12a17 17 0 0 1-34 0c0-5 2-9 5-13l1 4 5-2 3 1c1-5 4-8 7-9z" fill="url(#fx)" />
      <circle cx="18" cy="18.500" r="7.500" fill="url(#fxg)" />
      <path d="M3 11l8-1c2 1 4 2 7 2-1 3-5 3-6 5 1 5 6 7 10 4-3 5-11 6-14 0C7 17 8 15 3 11z" fill="#ffa02c" />
    </svg>
  );
}
function KeyboardPcIcon() {
  return (
    <svg viewBox="0 0 36 36" className="h-9 w-9">
      <ellipse cx="21" cy="31" rx="10" ry="4.500" fill="#dfe2e4" />
      <path d="M16 24h9l1 6h-9z" fill="#c4c8cb" />
      <path d="M8 1l26 3-3 22-23-3z" fill="#c9ced2" />
      <path d="M10 3l22 2.500-2.500 18L10 21z" fill="#1632c8" />
      <path d="M22 5l10 1-3 17-13-2z" fill="#3f66ee" />
      <rect x="1" y="8" width="27" height="11" fill="#4f9fe0" stroke="#b8dcf7" />
      <path d="M3 11h23M3 13.500h23M7 16.500h14" stroke="#fff" strokeWidth="1.500" strokeDasharray="2 1" />
    </svg>
  );
}
function CmdIcon() {
  return (
    <svg viewBox="0 0 34 28" className="h-7 w-[34px]">
      <rect width="34" height="28" fill="#b9bec2" />
      <rect x="1" y="1" width="32" height="3.500" fill="#e6e9eb" />
      <rect x="1.500" y="5" width="31" height="21.500" fill="#060606" />
      <path d="M1.500 5h31v6C18 12 8 16 1.500 24z" fill="#3a3a3a" />
      <text x="3" y="12" fontSize="7" fill="#e8e8e8" className="font-mono">
        C:\_
      </text>
    </svg>
  );
}
function GitIcon() {
  return (
    <svg viewBox="0 0 36 36" className="ml-px h-9 w-9">
      <path d="M18 0l8.500 8.500L18 17 9.500 8.500z" fill="#f57e7e" />
      <path d="M18 19l8.500 8.500L18 36 9.500 27.500z" fill="#fbe37c" />
      <path d="M8.500 9.500L17 18l-8.500 8.500L0 18z" fill="#84b2f8" />
      <path d="M27.500 9.500L36 18l-8.500 8.500L19 18z" fill="#8bd45e" />
      <path d="M13 5l5 7v14M18 12l7 6" fill="none" stroke="#1f2b33" strokeWidth="2.400" />
      <circle cx="18" cy="12.500" r="2.600" fill="#1f2b33" />
      <circle cx="18" cy="26" r="2.800" fill="#1f2b33" />
      <circle cx="25" cy="18" r="2.800" fill="#1f2b33" />
    </svg>
  );
}
function CodeIcon() {
  return (
    <svg viewBox="0 0 36 36" className="h-9 w-9">
      <path d="M26 0L0 23l3 4h2L28 10z" fill="#0b6cb8" />
      <path d="M0 13l3-4h2l23 17-2 10z" fill="#1583cf" />
      <path d="M26 0l10 4v28l-10 4-2-1 2-4V5z" fill="#2ba5f0" />
    </svg>
  );
}

function TaskButton({ children, line, active }: { children: React.ReactNode; line?: boolean; active?: boolean }) {
  return (
    <div className={"flex h-[60px] w-[57.75px] flex-col items-center " + (active ? "bg-[#4f6069]" : "")}>
      <div className="flex flex-1 items-center pt-0.5">{children}</div>
      <div className={(active ? "w-full " : "w-11 ") + "h-[3px] " + (line ? "bg-[#76b9ed]" : "")} />
    </div>
  );
}

function Taskbar() {
  return (
    <footer className="flex h-[60px] items-center bg-linear-to-r from-[#233c46] via-[#1f303f] to-[#1b2743] font-['Open_Sans'] text-white">
      <div className="flex w-[72px] justify-center">
        <svg viewBox="0 0 24 24" className="h-6 w-6" fill="#fff">
          <path d="M0 3.300l9.800-1.400v9.500H0zM11 1.700L24 0v11.400H11zM0 12.600h9.800v9.500L0 20.700zM11 12.600h13V24l-13-1.700z" />
        </svg>
      </div>
      <div className="flex h-[60px] w-[516px] items-center border-2 border-[#bfbfbf] bg-[#f2f2f2]">
        <svg viewBox="0 0 24 24" className="ml-4 h-6 w-6" fill="none" stroke="#1a1a1a" strokeWidth="1.700">
          <circle cx="15.500" cy="8.500" r="7.600" />
          <path d="M10 14L0 23.500" />
        </svg>
        <span className="ml-[18px] mt-[3px] text-[21.500px] tracking-[0px] text-[#2b2b2b]">Type here to search</span>
        <SearchArt />
      </div>
      <div className="flex w-[72px] justify-center">
        <div className="h-6 w-6 rounded-full border-[3px] border-white" />
      </div>
      <div className="flex w-[77px] pl-6">
        <svg viewBox="0 0 24 24" className="h-6 w-6" fill="none" stroke="#fff" strokeWidth="1.400">
          <path d="M1 0v4h15V0M1 7.500h15v10H1zM1 24v-4h15v4M22.500 0v24" />
          <rect x="20.800" y="7.500" width="3.200" height="3" fill="#fff" stroke="none" />
        </svg>
      </div>
      <TaskButton line>
        <ExplorerIcon />
      </TaskButton>
      <TaskButton>
        <MailIcon />
      </TaskButton>
      <TaskButton line active>
        <FirefoxIcon />
      </TaskButton>
      <TaskButton>
        <KeyboardPcIcon />
      </TaskButton>
      <TaskButton line>
        <CmdIcon />
      </TaskButton>
      <TaskButton line>
        <GitIcon />
      </TaskButton>
      <TaskButton line>
        <GitIcon />
      </TaskButton>
      <TaskButton line>
        <CodeIcon />
      </TaskButton>
      <div className="ml-[3px] flex h-[60px] w-[26px] flex-col items-center justify-between bg-[#f0f0f0] py-[9px]">
        <svg viewBox="0 0 12 10" className="h-[10px] w-3" fill="none" stroke="#555" strokeWidth="2.400">
          <path d="M1 8.500L6 2.500l5 6" />
        </svg>
        <svg viewBox="0 0 12 10" className="h-[10px] w-3" fill="none" stroke="#555" strokeWidth="2.400">
          <path d="M1 1.500l5 6 5-6" />
        </svg>
      </div>
      <svg viewBox="0 0 34 31" className="ml-[36px] mt-1 h-[31px] w-[34px]">
        <defs>
          <linearGradient id="cloud" x1="0" y1="0" x2="1" y2="1">
            <stop offset="0" stopColor="#b4cdf6" />
            <stop offset=".6" stopColor="#f2f5fb" />
            <stop offset="1" stopColor="#9fb4d8" />
          </linearGradient>
        </defs>
        <path d="M8 22A7.500 7.500 0 0 1 7 8a10 10 0 0 1 19-1 8 8 0 0 1 0 15z" fill="url(#cloud)" />
        <path d="M19.500 14c3 5 8 9 8 12.500a5 5 0 0 1-9.500 0C17.500 23 19 19 19.500 14z" fill="#1a9be6" />
      </svg>
      <span className="ml-[13px] mt-[3px] w-[45px] whitespace-nowrap text-[20px] tracking-[-0.400px]">17°C</span>
      <svg viewBox="0 0 18 11" className="ml-[31px] h-[11px] w-[18px]" fill="none" stroke="#fff" strokeWidth="1.500">
        <path d="M1 10l8-8.500L17 10" />
      </svg>
      <svg viewBox="0 0 16 25" className="ml-[31px] h-[25px] w-4" fill="none" stroke="#fff" strokeWidth="1.300">
        <rect x="3" y="0" width="10" height="19" rx="2" fill="#fff" stroke="none" />
        <path d="M1 14v7.500h14V14M8 21.500V24M4.500 24.300h7" />
      </svg>
      <svg viewBox="0 0 24 18" className="ml-[29px] h-[18px] w-6" fill="none" stroke="#fff" strokeWidth="1.200">
        <rect x="7" y="4" width="15" height="12.500" />
        <rect x="9" y="6" width="11.500" height="8.500" fill="#fff" stroke="none" />
        <path d="M23.300 8v5M1.500 3.500v4a2.500 2.500 0 0 0 5 0v-4zM2.500 0v3.500M5.500 0v3.500M4 10v6.500h3" />
      </svg>
      <svg viewBox="0 0 20 20" className="ml-[27px] mt-0.5 h-5 w-5" fill="none" stroke="#fff" strokeWidth="1.200">
        <path d="M1 18.500A17 17 0 0 1 18.500 1.500M5 18.500A13 13 0 0 1 18.500 6M9.500 18.500A9 9 0 0 1 18.500 10.500M14 18.500a5 5 0 0 1 4.500-4" opacity=".85" />
        <circle cx="17.500" cy="17.500" r="1.700" fill="#fff" stroke="none" />
      </svg>
      <svg viewBox="0 0 24 20" className="ml-[25px] h-5 w-6" fill="none" stroke="#fff" strokeWidth="1.300">
        <path d="M1 6.500h3.500L9.500 1.500v17L4.500 13.500H1zM13 7a5 5 0 0 1 0 6M16.500 4.500a9 9 0 0 1 0 11M20 2.500a13 13 0 0 1 0 15" />
      </svg>
      <svg viewBox="0 0 34 20" className="ml-[25px] h-5 w-[34px]" fill="none" stroke="#fff" strokeWidth="1.300">
        <rect x=".8" y=".8" width="32.400" height="18" />
        <path d="M4 6h26M4 10h26" strokeDasharray="1.500 2.100" />
        <path d="M4 14.500h3M9 14.500h16M27 14.500h3" />
      </svg>
      <span className="ml-[23px] mt-0.5 w-[34px] text-[18px] tracking-[-0.900px]">ENG</span>
      <div className="ml-[19px] mt-px w-[96px] whitespace-nowrap text-center text-[18px] leading-7 tracking-[-0.300px]">
        <p>11:40</p>
        <p>24/06/2022</p>
      </div>
      <svg viewBox="0 0 26 26" className="ml-[26px] mt-px h-[26px] w-[26px]" fill="none" stroke="#fff" strokeWidth="1.400">
        <path d="M1 1h23.500v18.500h-8l-4 4.500-4-4.500H1z" />
      </svg>
      <div className="ml-auto mr-[6px] h-[60px] w-0.5 bg-[#6d7588]" />
    </footer>
  );
}

export default function App() {
  return (
    <div className="h-[1015px] w-[1920px] overflow-hidden bg-[#121212]">
      <BrowserBar />
      <div className="flex">
        <Admin />
        <Scrollbar />
      </div>
      <Taskbar />
    </div>
  );
}
